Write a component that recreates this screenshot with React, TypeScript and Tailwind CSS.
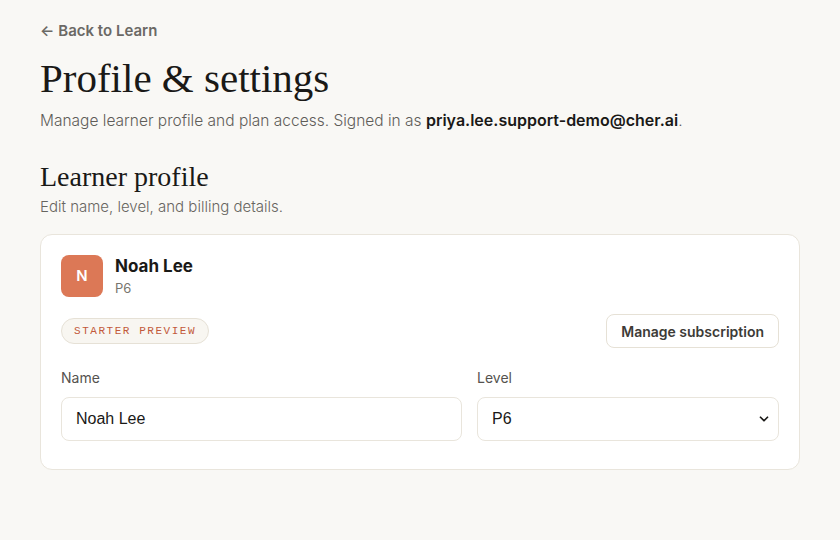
import { ChevronDown } from "lucide-react";

const sans = "font-['Inter','Noto_Sans',sans-serif]";
const serif = "font-['Liberation_Serif','DejaVu_Serif',serif]";

export default function App() {
  return (
    <div className={`min-h-[540px] bg-[#f9f8f5] px-10 pt-[20px] text-[#1c1b19] ${sans}`}>
      <a href="#" className="flex items-center gap-1 text-[15px] leading-[22px] font-semibold text-[#6b6965]">
        <span>←</span> Back to Learn
      </a>

      <h1 className={`mt-[12px] text-[41px] leading-[48px] text-[#1a1917] ${serif}`}>Profile &amp; settings</h1>
      <p className="mt-[7px] text-[15.5px] leading-[22px] font-light text-[#5f5d59]">
        Manage learner profile and plan access. Signed in as{" "}
        <span className="font-semibold text-[16px] text-[#1a1917]">priya.lee.support-demo@cher.ai</span>.
      </p>

      <h2 className={`mt-[28px] text-[28px] leading-[34px] text-[#1a1917] ${serif}`}>Learner profile</h2>
      <p className="mt-[2px] text-[15px] leading-[22px] font-light text-[#67655f]">Edit name, level, and billing details.</p>

      <section className="mt-[16px] rounded-xl border border-[#e9e5dc] bg-white px-5 pt-5 pb-[28px]">
        <div className="flex items-start gap-3">
          <div className="flex h-[42px] w-[42px] items-center justify-center rounded-lg bg-[#dc7856] text-[15px] font-semibold text-white">
            N
          </div>
          <div>
            <div className="text-[17px] font-bold leading-[22px] text-[#1a1917]">Noah Lee</div>
            <div className="mt-[1px] text-[13px] leading-[20px] text-[#77746e]">P6</div>
          </div>
        </div>

        <div className="mt-[16px] flex items-center justify-between">
          <span className="rounded-full border border-[#e6e1d6] bg-[#f8f6f1] px-3 py-[4px] font-['Liberation_Mono','DejaVu_Sans_Mono',monospace] text-[11px] uppercase tracking-[0.14em] text-[#c2593a]">
            Starter preview
          </span>
          <button className="flex h-[34px] items-center rounded-lg border border-[#e6e1d6] bg-white px-[14px] text-[14px] font-semibold text-[#3d3b37]">
            Manage subscription
          </button>
        </div>

        <div className="mt-[20px] grid grid-cols-[1fr_302px] gap-[15px]">
          <label className="flex flex-col gap-[9px]">
            <span className="text-[14px] leading-[20px] text-[#55534f]">Name</span>
            <input
              defaultValue="Noah Lee"
              className="h-[44px] rounded-lg border border-[#e9e5dc] bg-white px-[14px] font-['Liberation_Sans',Arial,sans-serif] text-[16px] text-[#1a1917] outline-none"
            />
          </label>
          <label className="flex flex-col gap-[9px]">
            <span className="text-[14px] leading-[20px] text-[#55534f]">Level</span>
            <div className="relative">
              <select
                defaultValue="P6"
                className="h-[44px] w-full appearance-none rounded-lg border border-[#e9e5dc] bg-white px-[14px] font-['Liberation_Sans',Arial,sans-serif] text-[16px] text-[#1a1917] outline-none"
              >
                <option>P5</option>
                <option>P6</option>
              </select>
              <ChevronDown
                className="pointer-events-none absolute right-[8px] top-1/2 h-[14px] w-[14px] -translate-y-1/2 text-[#1a1917]"
                strokeWidth={3}
              />
            </div>
          </label>
        </div>
      </section>
    </div>
  );
}
